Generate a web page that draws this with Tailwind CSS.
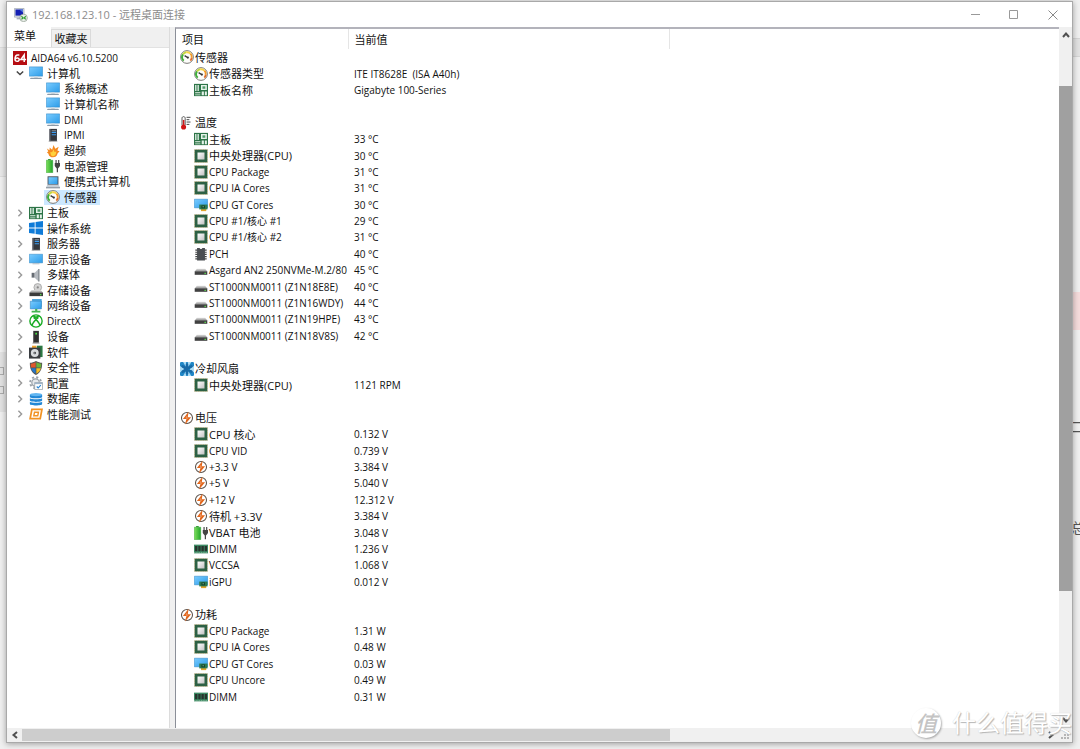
<!DOCTYPE html>
<html lang="zh-CN">
<head>
<meta charset="utf-8">
<meta name="viewport" content="width=device-width, initial-scale=1">
<title>192.168.123.10 - 远程桌面连接</title>
<script src="https://cdn.jsdelivr.net/npm/@tailwindcss/browser@4"></script>
</head>
<body class="relative flex h-screen flex-col overflow-hidden bg-[#f0f0f0] font-['Open_Sans','Noto_Sans_CJK_SC',sans-serif] text-[11px] leading-none text-[#111]">

<svg class="absolute size-0" aria-hidden="true">
  <defs>
    <linearGradient id="blue" x1="0" y1="0" x2="1" y2="1"><stop offset="0" stop-color="#7accff"/><stop offset="1" stop-color="#2c9ce9"/></linearGradient>
    <linearGradient id="silver" x1="0" y1="0" x2="1" y2="1"><stop offset="0" stop-color="#fff"/><stop offset="1" stop-color="#c2c2c2"/></linearGradient>
    <linearGradient id="metal" x1="0" y1="0" x2="0" y2="1"><stop offset="0" stop-color="#e2e2e2"/><stop offset="1" stop-color="#8a8a8a"/></linearGradient>
    <linearGradient id="lime" x1="0" y1="0" x2="1" y2="0"><stop offset="0" stop-color="#7fe05c"/><stop offset="1" stop-color="#22a52a"/></linearGradient>
  </defs>
  <symbol id="pc" viewBox="0 0 16 16"><path fill="url(#blue)" stroke="#2f86c4" stroke-width=".6" d="M.4 1h15.2v10.600H.4z"/><path fill="#d5dde4" d="M6 12h4v1.600H6z"/><path fill="#8c9aa8" d="M2 13.400h12l1 1.400H1z"/></symbol>
  <symbol id="display" viewBox="0 0 16 16"><path fill="url(#blue)" stroke="#2f86c4" stroke-width=".6" d="M.4 2.600h15.200v9.800H.4z"/><path fill="#a5b2be" d="M4 13h8v1H4z"/></symbol>
  <symbol id="tower" viewBox="0 0 16 16"><path fill="#34373d" d="M4 1h8.500v14H4z"/><path fill="#5a5f68" d="M4 1h1.400v14H4z"/><path stroke="#3c9cf0" stroke-width="1.200" d="M6.500 5h5M6.500 7.600h5"/><path stroke="#8a8f98" d="M6.500 3h5"/><path fill="#999" d="M3 14.600h10v.9H3z"/></symbol>
  <symbol id="fire" viewBox="0 0 16 16"><path fill="#f58a1f" d="M1 5l3 2 .2-3L7 6.500 8.600 1l2 4.500L14.500 3l-1.500 4.500 2.500.8-2.300 2.500c-.5 3-2.800 4.400-5.200 4.400S3.200 14 2.800 11L1 9.500l1.600-1z"/><path fill="#ffd23c" d="M5 9l2 .5L8.500 6l1.300 3 2-.5c0 3-1.300 5.400-3.600 5.400S5 12 5 9z"/></symbol>
  <symbol id="power" viewBox="0 0 16 16"><path fill="#389c38" d="M2.400 0h3v1.500h-3z"/><path fill="url(#lime)" stroke="#2a9a2d" stroke-width=".5" d="M.3 1.400h7.400v14.200H.3z"/><path stroke="#444" stroke-width="1.300" d="M11.500 1v4M14.500 1v4"/><path fill="#444" d="M10 4.500h6V8l-2 2.500h-2L10 8z"/><path stroke="#444" stroke-width="1.400" d="M13 10v5"/></symbol>
  <symbol id="laptop" viewBox="0 0 16 16"><path fill="#444b55" d="M1.800 1.500h12.400v9.700H1.800z"/><path fill="url(#blue)" d="M2.800 2.500h10.400v7.900H2.800z"/><path fill="#c5ced6" d="M1.500 11.200h13L16 14H0z"/><path fill="#77838f" d="M0 14h16v1.200H0z"/></symbol>
  <symbol id="gauge" viewBox="0 0 16 16"><circle cx="8" cy="8" r="7.300" fill="#fdfdfb" stroke="#6a6a66" stroke-width="1"/><path fill="none" stroke="#3fae3a" stroke-width="2.200" d="M4.200 12.200A5.500 5.500 0 0 1 3.500 5"/><path fill="none" stroke="#c3d83a" stroke-width="2.200" d="M3.500 5A5.500 5.500 0 0 1 7 2.600"/><path fill="none" stroke="#f6d347" stroke-width="2.200" d="M7 2.600A5.500 5.500 0 0 1 12 4.200"/><path fill="none" stroke="#f39a27" stroke-width="2.200" d="M12 4.200A5.500 5.500 0 0 1 13.400 9"/><path fill="none" stroke="#e36f2c" stroke-width="2.200" d="M13.400 9a5.500 5.500 0 0 1-1.600 3.200"/><path stroke="#333" stroke-width="1.500" d="M5.300 6.400L9 8.800"/><circle cx="9" cy="8.700" r="1.200" fill="#333"/></symbol>
  <symbol id="board" viewBox="0 0 16 16"><path fill="#2d7447" d="M0 1h16v14H0z"/><path fill="#e6f3ea" d="M1.300 2.300h1.500V9H1.300zM4 2.300h1.500V9H4zM8 2.300h6.700V8H8zM1.300 10.700h6v1.100h-6zM1.300 13h6v1h-6zM8.800 9.600h2.500V14H8.800zM12.400 9.600h2.300V14h-2.300z"/><path fill="#4f9869" d="M9.700 3.800h3.200v2.800H9.700z"/></symbol>
  <symbol id="windows" viewBox="0 0 16 16"><path fill="#0f7bd8" d="M0 2.400l6.500-1v6.100H0zM7.500 1.200L16 0v7.500H7.500zM0 8.500h6.500v6.100L0 13.600zM7.500 8.500H16V16l-8.500-1.200z"/></symbol>
  <symbol id="speaker" viewBox="0 0 16 16"><path fill="#666c73" d="M3 5.500h3.500v5.500H3z"/><path fill="#b5bac0" d="M6.500 5.500L11 1v14.500L6.500 11z"/><path fill="#7e858c" d="M10.500 1H12v14.500h-1.500z"/></symbol>
  <symbol id="storage" viewBox="0 0 16 16"><circle cx="10" cy="5" r="4.400" fill="#d4d4d4" stroke="#999" stroke-width=".8"/><circle cx="10" cy="5" r="1.300" fill="#888"/><path fill="url(#metal)" d="M3 8h10.500L16 11H.5z"/><path fill="#3b3b3b" d="M.5 11H16v4H.5z"/><path fill="#55da4d" d="M12.500 12.500h1.700V14h-1.700z"/></symbol>
  <symbol id="network" viewBox="0 0 16 16"><path fill="#4fa6df" d="M3.500 0h11v9h-11z"/><path fill="url(#blue)" stroke="#2b7cb8" stroke-width=".6" d="M1.500 2.500h12.700v8.800H1.500z"/><path fill="#45b552" d="M7 11.500h2.500v2H13v1.800H3v-1.800h4z"/></symbol>
  <symbol id="directx" viewBox="0 0 16 16"><circle cx="8" cy="8" r="7" fill="#fff" stroke="#18ac24" stroke-width="1.600"/><path fill="none" stroke="#18ac24" stroke-width="1.600" d="M3.500 13C4.500 9.500 8 6 10.800 3.800M12.500 13C11.500 9.500 8 6 5.200 3.800M4 2.500c1.500-.3 3 .6 4 1.300 1-.7 2.500-1.600 4-1.300"/></symbol>
  <symbol id="device" viewBox="0 0 16 16"><path fill="#2f2f2f" d="M4.800 1h6.500v13.500H4.800z"/><path fill="#686868" d="M4.800 1h1v13.500h-1z"/><path fill="#4ade46" d="M7.200 3.200h2v2h-2z"/><path fill="#888" d="M4 14.500h8v1H4z"/></symbol>
  <symbol id="software" viewBox="0 0 16 16"><path fill="#f0a12b" d="M3.500.8h5v4h-5z"/><path fill="#2c7a43" d="M9 .8h6.500v13H9z"/><path fill="#393c40" d="M0 3h13v12.500H0z"/><circle cx="6.600" cy="9.200" r="4.500" fill="#d9dcdf"/><circle cx="6.600" cy="9.200" r="1.500" fill="#393c40"/><circle cx="6.600" cy="9.200" r=".6" fill="#fff"/></symbol>
  <symbol id="shield" viewBox="0 0 16 16"><path fill="#555" d="M8 0c2.500 1.500 4.500 2 7 2 .2 6-1.200 11-7 14C2.200 13 .8 8 1 2c2.500 0 4.500-.5 7-2z"/><path fill="#e2572c" d="M7.600 1.500v6H2.200C2 6 2 4.500 2 3c2.200 0 3.700-.5 5.600-1.500z"/><path fill="#6cb33a" d="M8.400 1.500C10.300 2.500 11.800 3 14 3c0 1.500 0 3-.2 4.500H8.400z"/><path fill="#2577ca" d="M2.400 8.300h5.200v6.200C4.600 12.900 3 10.900 2.400 8.300z"/><path fill="#f6bd24" d="M8.400 8.300h5.200c-.6 2.600-2.200 4.600-5.200 6.200z"/></symbol>
  <symbol id="config" viewBox="0 0 16 16"><circle cx="7.500" cy="7.500" r="6.200" fill="none" stroke="#9aa1a8" stroke-width="2.200" stroke-dasharray="2.400 2.470"/><circle cx="7.500" cy="7.500" r="4.300" fill="#e5e8eb" stroke="#9aa1a8" stroke-width="1.400"/><path fill="#fff" stroke="#8e969e" stroke-width=".8" d="M6.500 7.500h9v8h-9z"/><path fill="#9fb4c8" d="M6.500 7.500h9v1.800h-9z"/><path fill="none" stroke="#2c86d3" stroke-width="1.300" d="M8.800 12l1.700 1.700 3-3.200"/></symbol>
  <symbol id="database" viewBox="0 0 16 16"><g fill="#2388d6"><path d="M1 3v2.600c0 2 14 2 14 0V3z"/><path d="M1 7.200v2.600c0 2 14 2 14 0V7.200c-2 1.500-12 1.500-14 0z"/><path d="M1 11.200v2.600c0 2.200 14 2.200 14 0v-2.600c-2 1.500-12 1.500-14 0z"/></g><ellipse cx="8" cy="3" rx="7" ry="1.800" fill="#62b6f1"/></symbol>
  <symbol id="bench" viewBox="0 0 16 16"><path fill="none" stroke="#f29222" stroke-width="2" d="M3.300 2.800h11.500l-2 10.400H1.300z"/><path fill="none" stroke="#f29222" stroke-width="1.600" d="M6.300 6h4.500l-.8 4H5.500z"/></symbol>
  <symbol id="aida" viewBox="0 0 16 16"><path fill="#b60d12" d="M0 0h16v16H0z"/><path fill="none" stroke="#fff" stroke-width="1.700" d="M7.200 4.500H5.500C3 4.500 2.300 7 2.300 9.500c0 3.200 4.800 3 4.800.3 0-2.300-3.500-2.500-4.600-.5M12.800 12.500v-8L9 9.800h6"/></symbol>
  <symbol id="cpu" viewBox="0 0 16 16"><path fill="#2d6144" d="M.7.7h14.600v14.600H.7z"/><path fill="none" stroke="#b7a266" stroke-width=".8" stroke-dasharray="1 1" d="M.5.5h15v15H.5z"/><path fill="url(#silver)" d="M4 4h8v8H4z"/></symbol>
  <symbol id="gpu" viewBox="0 0 16 16"><path fill="url(#blue)" stroke="#2f86c4" stroke-width=".6" d="M.4 1.400h15.200v9.800H.4z"/><path fill="#e2a52c" d="M8 12.500h6V15H8z"/><path fill="#2c7a4e" d="M6 7.500h9.500V13H6z"/><path fill="#16402c" d="M8.500 8.500h4v3.300h-4z"/><path fill="#6cc58d" d="M9.800 9.500h1.400v1.200H9.800z"/></symbol>
  <symbol id="chip" viewBox="0 0 16 16"><path stroke="#444" stroke-width="1.300" d="M1.500 3.500h13M1.500 6h13M1.500 8.500h13M1.500 11h13M1.500 13.500h13"/><path fill="#4b4e52" d="M3.500 1.200h3c.3 1.600 2.700 1.600 3 0h3v14.300h-9z"/></symbol>
  <symbol id="disk" viewBox="0 0 16 16"><path fill="url(#metal)" d="M3.300 6.500h9.500l2.400 3.200H.8z"/><path fill="#414141" d="M.8 9.500h14.400v4H.8z"/><path fill="#5edf50" d="M12 11h1.600v1.500H12z"/></symbol>
  <symbol id="thermo" viewBox="0 0 16 16"><path fill="#fff" stroke="#444" stroke-width="1" d="M2.300 10.300V2.500c0-2.400 3.600-2.400 3.600 0v7.800"/><path stroke="#d01818" stroke-width="1.800" d="M4.100 4.500V12"/><circle cx="4.100" cy="12.600" r="2.900" fill="#cf1414"/><path stroke="#444" stroke-width="1.100" d="M7.500 1.500H12M7.500 4.200h3.200M7.500 6.900H12M7.500 9.600h3.200"/></symbol>
  <symbol id="fan" viewBox="0 0 16 16"><rect width="16" height="16" rx="1.500" fill="#1f86c6"/><path fill="#a9dbf5" d="M0 4.500L4.500 7v2L0 12zM16 4.500L11.500 7v2l4.500 3zM3.500 0L7 6V0zM9 0v6l4-6zM3.500 16L7 10v6zM9 16v-6l4 6z"/><path stroke="#1769a6" stroke-width="3" stroke-linecap="round" d="M8 3v10M3 5l10 6M3 11l10-6"/></symbol>
  <symbol id="volt" viewBox="0 0 16 16"><circle cx="8" cy="8" r="6.300" fill="#fff" stroke="#5b5149" stroke-width="1.200"/><path fill="#e2661b" d="M9.800.8L3.300 9h3.900l-1.400 6.400L12.700 7H8.900z"/><path fill="#fff" d="M7.700 5.500L6.500 7.700h1.200l-.4 2.500 1.700-2.400H7.500z" opacity=".6"/></symbol>
  <symbol id="dimm" viewBox="0 0 16 16"><path fill="#3d8a64" d="M0 3h16v10H0z"/><path fill="#28332d" d="M1.200 4.500h2.700v6H1.200zM4.900 4.500h2.700v6H4.900zM8.500 4.500h2.700v6H8.500zM12.200 4.500h2.700v6h-2.700z"/><path stroke="#bcd6c1" stroke-width="1" stroke-dasharray="1 1" d="M0 12.500h16"/></symbol>
  <symbol id="closed" viewBox="0 0 10 10"><path fill="none" stroke="#9a9a9a" stroke-width="1.800" d="M3 1l4 4-4 4"/></symbol>
  <symbol id="open" viewBox="0 0 10 10"><path fill="none" stroke="#444" stroke-width="1.800" d="M1 3l4 4 4-4"/></symbol>
  <symbol id="arrow" viewBox="0 0 10 10"><path fill="none" stroke="#505050" stroke-width="2" d="M2 7l3-3.500L8 7"/></symbol>
  <symbol id="remote" viewBox="0 0 16 16"><path fill="#d7dce2" stroke="#8790a0" stroke-width=".6" d="M.5.5h11v10H.5z"/><path fill="#1420b4" d="M1.700 1.700h8.600v7H1.700z"/><path fill="#5579dc" d="M6 1.700h4.300v3.500z"/><path fill="#aab1bb" d="M3 11h5v2H3z"/><circle cx="11" cy="11.300" r="4.300" fill="#e9eee9" stroke="#8d9a8d" stroke-width=".8"/><path fill="none" stroke="#35a035" stroke-width="1.500" d="M8.500 9.500l1.800 1.800L8.500 13M13.500 9.500l-1.800 1.800 1.800 1.700"/></symbol>
</svg>

<!-- Desktop behind the window -->
<div class="absolute inset-0 overflow-hidden text-[#555]" aria-hidden="true">
  <div class="absolute top-[47px] left-0 h-[130px] w-2 border-y border-[#dcdcdc] bg-[#e8e8e8]"></div>
  <div class="absolute top-[352px] left-0 h-[60px] w-2 bg-[#e2e2e2]"></div>
  <div class="absolute top-[367px] -left-1 size-2 border border-[#aaa]"></div>
  <div class="absolute top-[386px] -left-1 size-2 border border-[#aaa]"></div>
  <div class="absolute top-[38px] right-0 h-[19px] w-2 border-y border-[#d5d5d5] bg-[#e2e2e2]"></div>
  <div class="absolute top-[292px] right-0 h-[38px] w-2 bg-[#f5dcdc]"></div>
  <div class="absolute top-[420px] right-0 w-[9px] text-[14px]">二</div>
  <div class="absolute top-[521px] right-0 w-[9px] text-[14px]">总</div>
</div>

<main class="relative mt-px mr-[7px] mb-[6px] ml-[6px] flex min-h-0 flex-1 flex-col border border-[#a9a9a9] bg-[#f0f0f0] shadow-[0_1px_6px_rgba(0,0,0,0.35)]">
  <header class="flex h-[25px] shrink-0 items-center bg-white text-[#8c8c8c]">
    <svg class="ml-[7px] size-[14px]"><use href="#remote"/></svg>
    <h1 class="ml-1 flex-1">192.168.123.10 - 远程桌面连接</h1>
    <button aria-label="最小化" class="flex w-[39px] justify-center"><svg class="size-[10px]" viewBox="0 0 10 10"><path stroke="#999" d="M1 4.500h9"/></svg></button>
    <button aria-label="最大化" class="flex w-[39px] justify-center"><svg class="size-[10px]" viewBox="0 0 10 10"><path fill="none" stroke="#999" d="M.5.500h8v8h-8z"/></svg></button>
    <button aria-label="关闭" class="flex w-[39px] justify-center"><svg class="size-[10px]" viewBox="0 0 10 10"><path stroke="#888" d="M.5.500l9 9M9.500.500l-9 9"/></svg></button>
  </header>

  <div class="flex min-h-0 flex-1">
    <aside class="flex w-[163px] shrink-0 flex-col border-r border-[#dcdcdc]">
      <nav class="flex h-5 shrink-0 items-end" aria-label="标签">
        <button class="h-5 w-11 bg-white pr-2 pb-[3px] text-center">菜单</button>
        <button class="h-[18px] w-10 border border-b-0 border-[#dadada]">收藏夹</button>
      </nav>
      <div class="flex-1 border-t border-[#e2e2e2] bg-white pt-[2px]">
        <ul class="flex h-[372px] flex-col whitespace-nowrap [&_button]:mr-[2px] [&_button]:flex [&_button]:w-[14px] [&_button]:justify-center [&_button_svg]:size-2 [&_li]:flex [&_li]:flex-1 [&_li]:items-center [&_li>svg]:mr-1 [&_li>svg]:size-[14px] [&_li>svg]:shrink-0">
          <li class="pl-[6px] text-[10px]"><svg><use href="#aida"/></svg>AIDA64 v6.10.5200</li>
          <li class="pl-[6px]"><button aria-label="收起"><svg><use href="#open"/></svg></button><svg><use href="#pc"/></svg>计算机</li>
          <li class="pl-[39px]"><svg><use href="#pc"/></svg>系统概述</li>
          <li class="pl-[39px]"><svg><use href="#pc"/></svg>计算机名称</li>
          <li class="pl-[39px] text-[10px]"><svg><use href="#pc"/></svg>DMI</li>
          <li class="pl-[39px] text-[10px]"><svg><use href="#tower"/></svg>IPMI</li>
          <li class="pl-[39px]"><svg><use href="#fire"/></svg>超频</li>
          <li class="pl-[39px]"><svg><use href="#power"/></svg>电源管理</li>
          <li class="pl-[39px]"><svg><use href="#laptop"/></svg>便携式计算机</li>
          <li class="ml-[37px] self-start bg-[#cce8ff] pr-[3px] pl-[2px]"><svg><use href="#gauge"/></svg>传感器</li>
          <li class="pl-[6px]"><button aria-label="展开"><svg><use href="#closed"/></svg></button><svg><use href="#board"/></svg>主板</li>
          <li class="pl-[6px]"><button aria-label="展开"><svg><use href="#closed"/></svg></button><svg><use href="#windows"/></svg>操作系统</li>
          <li class="pl-[6px]"><button aria-label="展开"><svg><use href="#closed"/></svg></button><svg><use href="#tower"/></svg>服务器</li>
          <li class="pl-[6px]"><button aria-label="展开"><svg><use href="#closed"/></svg></button><svg><use href="#display"/></svg>显示设备</li>
          <li class="pl-[6px]"><button aria-label="展开"><svg><use href="#closed"/></svg></button><svg><use href="#speaker"/></svg>多媒体</li>
          <li class="pl-[6px]"><button aria-label="展开"><svg><use href="#closed"/></svg></button><svg><use href="#storage"/></svg>存储设备</li>
          <li class="pl-[6px]"><button aria-label="展开"><svg><use href="#closed"/></svg></button><svg><use href="#network"/></svg>网络设备</li>
          <li class="pl-[6px] text-[10px]"><button aria-label="展开"><svg><use href="#closed"/></svg></button><svg><use href="#directx"/></svg>DirectX</li>
          <li class="pl-[6px]"><button aria-label="展开"><svg><use href="#closed"/></svg></button><svg><use href="#device"/></svg>设备</li>
          <li class="pl-[6px]"><button aria-label="展开"><svg><use href="#closed"/></svg></button><svg><use href="#software"/></svg>软件</li>
          <li class="pl-[6px]"><button aria-label="展开"><svg><use href="#closed"/></svg></button><svg><use href="#shield"/></svg>安全性</li>
          <li class="pl-[6px]"><button aria-label="展开"><svg><use href="#closed"/></svg></button><svg><use href="#config"/></svg>配置</li>
          <li class="pl-[6px]"><button aria-label="展开"><svg><use href="#closed"/></svg></button><svg><use href="#database"/></svg>数据库</li>
          <li class="pl-[6px]"><button aria-label="展开"><svg><use href="#closed"/></svg></button><svg><use href="#bench"/></svg>性能测试</li>
        </ul>
      </div>
    </aside>

    <section class="ml-[5px] min-w-0 flex-1 overflow-hidden border-t-2 border-l border-[#b3b3bb] border-l-[#8b8f98] bg-white">
      <table class="h-[676px] w-full table-fixed border-collapse text-left whitespace-nowrap [&_span]:inline-flex [&_span]:items-center [&_span]:gap-px [&_span]:align-middle [&_svg]:size-[14px] [&_svg]:shrink-0 [&_tbody]:text-[10px] [&_tbody_th]:text-[11px] [&_tbody_tr]:h-4 [&_td]:p-0 [&_td+td]:pl-[6px] [&_tbody_th]:p-0 [&_tbody_th]:pl-1 [&_tbody_th]:font-normal [&_td:first-child]:pl-[18px]">
        <colgroup><col class="w-[172px]"><col class="w-[321px]"><col></colgroup>
        <thead>
          <tr class="h-5 [&_th]:border-r [&_th]:border-[#e5e5e5] [&_th]:py-0 [&_th]:pl-[6px] [&_th]:font-normal"><th>项目</th><th>当前值</th><td></td></tr>
        </thead>
        <tbody>
          <tr><th colspan="2"><span><svg><use href="#gauge"/></svg>传感器</span></th></tr>
          <tr><td class="text-[11px]"><span><svg><use href="#gauge"/></svg>传感器类型</span></td><td>ITE IT8628E&nbsp; (ISA A40h)</td></tr>
          <tr><td class="text-[11px]"><span><svg><use href="#board"/></svg>主板名称</span></td><td>Gigabyte 100-Series</td></tr>
          <tr><td colspan="2"></td></tr>
          <tr><th colspan="2"><span><svg><use href="#thermo"/></svg>温度</span></th></tr>
          <tr><td class="text-[11px]"><span><svg><use href="#board"/></svg>主板</span></td><td>33 °C</td></tr>
          <tr><td class="text-[11px]"><span><svg><use href="#cpu"/></svg>中央处理器(CPU)</span></td><td>30 °C</td></tr>
          <tr><td><span><svg><use href="#cpu"/></svg>CPU Package</span></td><td>31 °C</td></tr>
          <tr><td><span><svg><use href="#cpu"/></svg>CPU IA Cores</span></td><td>31 °C</td></tr>
          <tr><td><span><svg><use href="#gpu"/></svg>CPU GT Cores</span></td><td>30 °C</td></tr>
          <tr><td><span><svg><use href="#cpu"/></svg>CPU #1/核心 #1</span></td><td>29 °C</td></tr>
          <tr><td><span><svg><use href="#cpu"/></svg>CPU #1/核心 #2</span></td><td>31 °C</td></tr>
          <tr><td><span><svg><use href="#chip"/></svg>PCH</span></td><td>40 °C</td></tr>
          <tr><td><span><svg><use href="#disk"/></svg>Asgard AN2 250NVMe-M.2/80</span></td><td>45 °C</td></tr>
          <tr><td><span><svg><use href="#disk"/></svg>ST1000NM0011 (Z1N18E8E)</span></td><td>40 °C</td></tr>
          <tr><td><span><svg><use href="#disk"/></svg>ST1000NM0011 (Z1N16WDY)</span></td><td>44 °C</td></tr>
          <tr><td><span><svg><use href="#disk"/></svg>ST1000NM0011 (Z1N19HPE)</span></td><td>43 °C</td></tr>
          <tr><td><span><svg><use href="#disk"/></svg>ST1000NM0011 (Z1N18V8S)</span></td><td>42 °C</td></tr>
          <tr><td colspan="2"></td></tr>
          <tr><th colspan="2"><span><svg><use href="#fan"/></svg>冷却风扇</span></th></tr>
          <tr><td class="text-[11px]"><span><svg><use href="#cpu"/></svg>中央处理器(CPU)</span></td><td>1121 RPM</td></tr>
          <tr><td colspan="2"></td></tr>
          <tr><th colspan="2"><span><svg><use href="#volt"/></svg>电压</span></th></tr>
          <tr><td class="text-[11px]"><span><svg><use href="#cpu"/></svg>CPU 核心</span></td><td>0.132 V</td></tr>
          <tr><td><span><svg><use href="#cpu"/></svg>CPU VID</span></td><td>0.739 V</td></tr>
          <tr><td><span><svg><use href="#volt"/></svg>+3.3 V</span></td><td>3.384 V</td></tr>
          <tr><td><span><svg><use href="#volt"/></svg>+5 V</span></td><td>5.040 V</td></tr>
          <tr><td><span><svg><use href="#volt"/></svg>+12 V</span></td><td>12.312 V</td></tr>
          <tr><td class="text-[11px]"><span><svg><use href="#volt"/></svg>待机 +3.3V</span></td><td>3.384 V</td></tr>
          <tr><td class="text-[11px]"><span><svg><use href="#power"/></svg>VBAT 电池</span></td><td>3.048 V</td></tr>
          <tr><td><span><svg><use href="#dimm"/></svg>DIMM</span></td><td>1.236 V</td></tr>
          <tr><td><span><svg><use href="#cpu"/></svg>VCCSA</span></td><td>1.068 V</td></tr>
          <tr><td><span><svg><use href="#gpu"/></svg>iGPU</span></td><td>0.012 V</td></tr>
          <tr><td colspan="2"></td></tr>
          <tr><th colspan="2"><span><svg><use href="#volt"/></svg>功耗</span></th></tr>
          <tr><td><span><svg><use href="#cpu"/></svg>CPU Package</span></td><td>1.31 W</td></tr>
          <tr><td><span><svg><use href="#cpu"/></svg>CPU IA Cores</span></td><td>0.48 W</td></tr>
          <tr><td><span><svg><use href="#gpu"/></svg>CPU GT Cores</span></td><td>0.03 W</td></tr>
          <tr><td><span><svg><use href="#cpu"/></svg>CPU Uncore</span></td><td>0.49 W</td></tr>
          <tr><td><span><svg><use href="#dimm"/></svg>DIMM</span></td><td>0.31 W</td></tr>
        </tbody>
      </table>
    </section>

    <div class="flex w-[13px] shrink-0 flex-col items-center">
      <button aria-label="向上滚动" class="flex h-[59px] shrink-0 justify-center pt-[3px]"><svg class="size-[10px]"><use href="#arrow"/></svg></button>
      <div class="h-[72%] w-full bg-[#a0a0a0]"></div>
      <button aria-label="向下滚动" class="mt-auto mb-[3px]"><svg class="size-[10px] rotate-180"><use href="#arrow"/></svg></button>
    </div>
  </div>

  <div class="flex h-[14px] shrink-0 items-center pr-[2px]">
    <button aria-label="向左滚动" class="flex w-[15px] shrink-0 justify-center"><svg class="size-[10px] -rotate-90"><use href="#arrow"/></svg></button>
    <div class="h-3 w-[61%] bg-[#cdcdcd]"></div>
    <button aria-label="向右滚动" class="mr-1 ml-auto"><svg class="size-[10px] rotate-90"><use href="#arrow"/></svg></button>
    <svg class="size-[10px]" viewBox="0 0 10 10"><path fill="#b5b5b5" d="M7 1h2v2H7zM4 4h2v2H4zM7 4h2v2H7zM1 7h2v2H1zM4 7h2v2H4zM7 7h2v2H7z"/></svg>
  </div>
</main>

<!-- Site watermark over the lower right corner -->
<div class="pointer-events-none absolute right-2 bottom-[11px] flex items-center gap-[11px] whitespace-nowrap">
  <div class="flex size-[30px] items-center justify-center rounded-full bg-white text-[22px] font-medium text-[#c4c4c4] shadow-[1px_1px_2px_rgba(0,0,0,0.3)]"><i>值</i></div>
  <div class="text-[24px] text-white [text-shadow:1px_1px_1px_#b5b5b5,0_0_1px_#ccc]">什么值得买</div>
</div>
</body>
</html>
